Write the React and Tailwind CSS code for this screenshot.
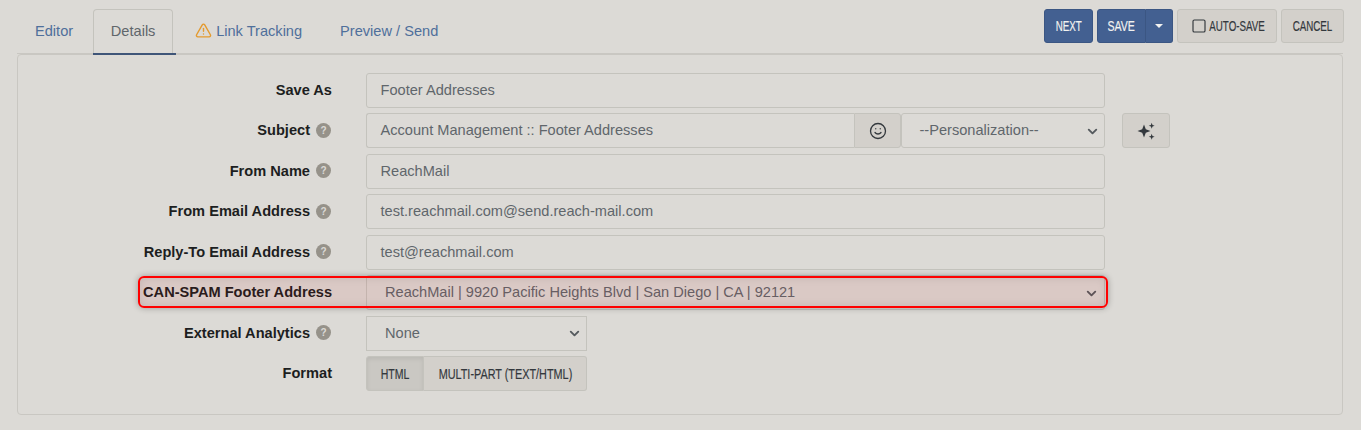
import { AlertTriangle, ChevronDown, Smile, Square } from "lucide-react";

const font = "font-['Liberation_Sans',Arial,sans-serif]";
const inputBox =
  "h-[35px] pt-[1px] border border-[#c4c3bd] rounded-[3px] bg-[#dcdad6] text-[14.6px] text-[#60666b] flex items-center whitespace-nowrap";

function Help() {
  return (
    <span className="ml-[6px] mr-px -mt-[1.500px] w-[15px] h-[15px] rounded-full bg-[#96928a] text-[#dcdad6] text-[10px] font-bold flex items-center justify-center">
      ?
    </span>
  );
}

function Row({ label, help, children }) {
  return (
    <div className="flex items-center h-[35px] mb-[5.5px]">
      <div className="w-[314px] pt-[0.800px] flex items-center justify-end text-[14.6px] font-bold text-[#1c1e21] whitespace-nowrap">
        {label}
        {help && <Help />}
      </div>
      <div className="ml-[34px] flex items-center">{children}</div>
    </div>
  );
}

function TextBox({ value }) {
  return <div className={`${inputBox} w-[739px] pl-[13.500px]`}>{value}</div>;
}

function Caret() {
  return <ChevronDown size={15} strokeWidth={3} className="text-[#555a5e]" />;
}

// buttons in the picture use a condensed face, squeeze the text to get there
function Cond({ children, className = "scale-x-[0.63]" }) {
  return (
    <span className={`inline-block whitespace-nowrap text-[15.5px] [-webkit-text-stroke:0.2px] ${className}`}>
      {children}
    </span>
  );
}

function Btn({ children, className = "" }) {
  return (
    <div
      className={`h-[34px] shrink-0 flex items-center justify-center border rounded-[3px] uppercase ${className}`}
    >
      {children}
    </div>
  );
}

const greyBtn = "bg-[#d3d0cb] border-[#c4c3bd] text-[#33383d]";
const blueBtn = "bg-[#436091] border-[#3b5683] text-[#f2f2f0]";

export default function App() {
  return (
    <div className={`${font} bg-[#dcdad6] w-[1361px] h-[430px] overflow-hidden`}>
      {/* tabs + actions */}
      <div className="flex items-end justify-between pt-[9px] ml-[17px] w-[1326px] border-b border-[#c9c7c2] h-[54px]">
        <div className="flex text-[14.6px] text-[#4f6f9b] h-[44px]">
          <div className="pl-[18px] pr-[20px] pt-[1px] flex items-center">Editor</div>
          <div className="relative z-10 w-[80px] h-[46px] pb-[2px] flex items-center justify-center border border-b-0 border-[#c4c3bd] rounded-t-[4px] text-[#60666b]">
            Details
            <span className="absolute left-[-1px] right-[-4px] bottom-0 h-[2px] bg-[#3f5578]" />
          </div>
          <div className="ml-[22px] pt-[1px] flex items-center gap-[4px]">
            <AlertTriangle size={17} strokeWidth={2} className="text-[#e49a2e] -translate-y-px" />
            Link Tracking
          </div>
          <div className="ml-[38px] pt-[1px] flex items-center">Preview / Send</div>
        </div>
        <div className="flex gap-[4px] self-start mr-[-1px]">
          <Btn className={`${blueBtn} w-[49px]`}>
            <Cond>Next</Cond>
          </Btn>
          <div className="flex">
            <Btn className={`${blueBtn} w-[49px] rounded-r-none`}>
              <Cond className="scale-x-[0.68]">Save</Cond>
            </Btn>
            <Btn className={`${blueBtn} w-[27px] rounded-l-none border-l-0`}>
              <span className="w-0 h-0 border-x-[4px] border-x-transparent border-t-[4px] border-t-[#f2f2f0]" />
            </Btn>
          </div>
          <Btn className={`${greyBtn} w-[100px] gap-[3px] pl-[2px]`}>
            <Square size={16} strokeWidth={1.75} />
            <span className="w-[56px] flex justify-center">
              <Cond>Auto-Save</Cond>
            </span>
          </Btn>
          <Btn className={`${greyBtn} w-[63px]`}>
            <Cond>Cancel</Cond>
          </Btn>
        </div>
      </div>

      {/* form panel */}
      <div className="relative ml-[17px] w-[1326px] h-[361px] border border-[#c9c7c2] rounded-[4px] pt-[17.800px]">
        <Row label="Save As">
          <TextBox value="Footer Addresses" />
        </Row>
        <Row label="Subject" help>
          <div className={`${inputBox} w-[488px] pl-[13.500px] rounded-r-none border-r-0`}>
            Account Management :: Footer Addresses
          </div>
          <div className="w-[47px] h-[35px] bg-[#d3d0cb] border border-[#c4c3bd] rounded-r-[3px] flex items-center justify-center text-[#33383d]">
            <Smile size={18} strokeWidth={1.75} />
          </div>
          <div className={`${inputBox} w-[204px] pl-[17.500px] pr-[4px] justify-between`}>
            --Personalization--
            <Caret />
          </div>
          <div className="ml-[17px] w-[48px] h-[35px] bg-[#d3d0cb] border border-[#c4c3bd] rounded-[3px] flex items-center justify-center">
            <svg width="20" height="20" viewBox="0 0 20 20" fill="#33383d">
              <path d="M8 3.500 9.800 8.200 14.500 10 9.800 11.800 8 16.500 6.200 11.800 1.500 10 6.200 8.200Z" />
              <path d="M15.700 1.700 16.500 3.900 18.700 4.700 16.500 5.500 15.700 7.700 14.900 5.500 12.700 4.700 14.900 3.900Z" />
              <path d="M15.700 12.700 16.500 14.900 18.700 15.700 16.500 16.500 15.700 18.700 14.900 16.500 12.700 15.700 14.900 14.900Z" />
            </svg>
          </div>
        </Row>
        <Row label="From Name" help>
          <TextBox value="ReachMail" />
        </Row>
        <Row label="From Email Address" help>
          <TextBox value="test.reachmail.com@send.reach-mail.com" />
        </Row>
        <Row label="Reply-To Email Address" help>
          <TextBox value="test@reachmail.com" />
        </Row>
        <Row label="CAN-SPAM Footer Address">
          <div className={`${inputBox} w-[739px] pl-[18px] pr-[5px] justify-between`}>
            ReachMail | 9920 Pacific Heights Blvd | San Diego | CA | 92121
            <Caret />
          </div>
        </Row>
        <Row label="External Analytics" help>
          <div className={`${inputBox} w-[221px] pl-[18px] pr-[4px] justify-between rounded-none`}>
            None
            <Caret />
          </div>
        </Row>
        <Row label="Format">
          <div className="flex">
            <Btn className="w-[58px] h-[35px] bg-[#cac8c3] border-[#c4c3bd] text-[#33383d] rounded-r-none shadow-[inset_0_2px_4px_rgba(0,0,0,0.08)]">
              <Cond className="scale-x-[0.68]">HTML</Cond>
            </Btn>
            <Btn className={`${greyBtn} w-[163px] h-[35px] rounded-l-none border-l-0`}>
              <Cond className="scale-x-[0.7]">Multi-Part (Text/Html)</Cond>
            </Btn>
          </div>
        </Row>

        {/* red highlight over the footer row */}
        <div className="absolute left-[120px] top-[221px] w-[970px] h-[32px] border-2 border-[#ff0000] rounded-[6px] bg-[#c00000]/[0.08] shadow-[0_0_6px_rgba(0,0,0,0.3),inset_0_0_8px_rgba(0,0,0,0.1)]" />
      </div>
    </div>
  );
}
